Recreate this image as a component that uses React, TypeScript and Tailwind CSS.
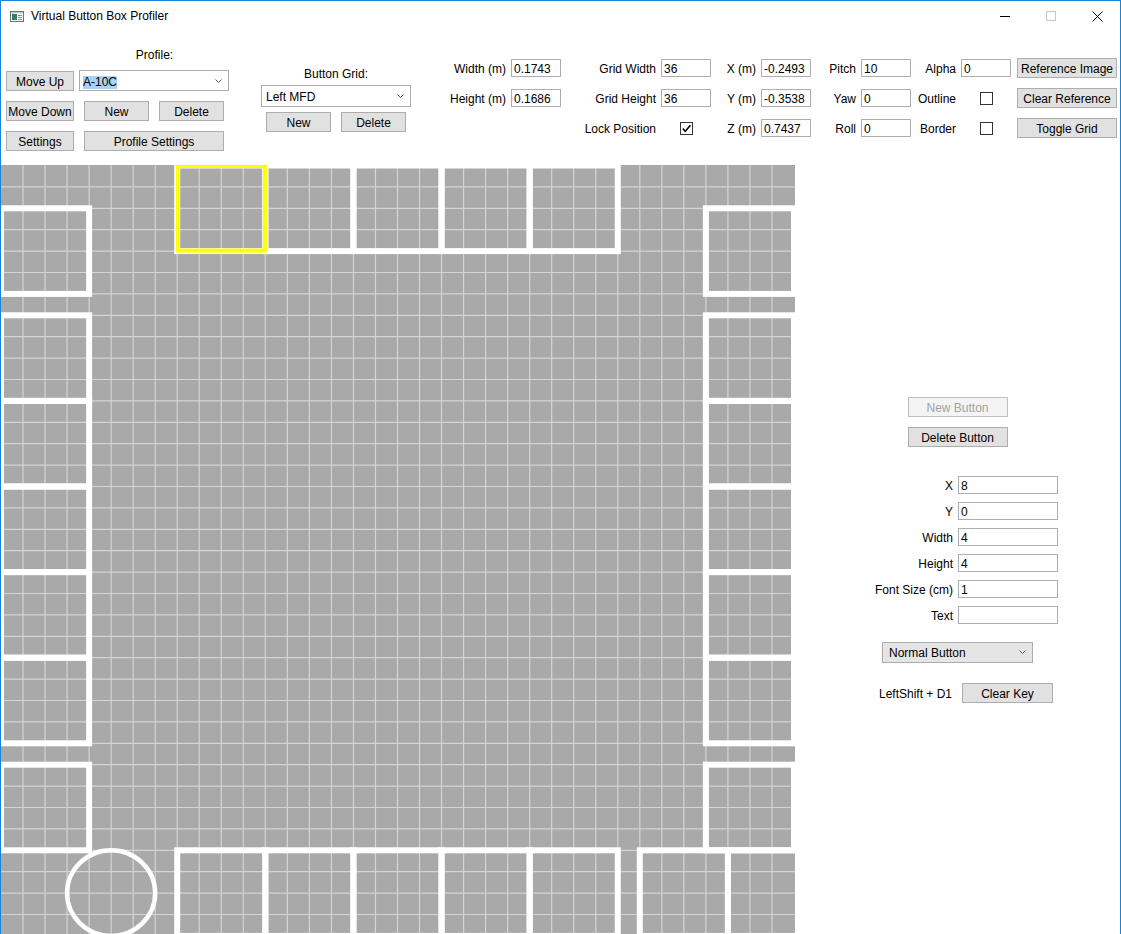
import React from 'react'

type Kids = { children?: React.ReactNode; className?: string }

function Btn({ children, className = '', disabled = false }: Kids & { disabled?: boolean }) {
    return (
        <div
            className={`flex shrink-0 items-center justify-center border pt-[2px] leading-none ${
                disabled
                    ? 'border-[#bfbfbf] bg-[#f4f4f4] text-[#a3a3a3]'
                    : 'border-[#adadad] bg-[#e1e1e1] text-black'
            } ${className}`}
        >
            {children}
        </div>
    )
}

function Chevron() {
    return (
        <svg width="7" height="4" viewBox="0 0 7 4" className="shrink-0">
            <path d="M0.5 0.5L3.5 3.5L6.5 0.5" fill="none" stroke="#5a5a5a" strokeWidth="1" />
        </svg>
    )
}

function Combo({ children, className = '', selected = false }: Kids & { selected?: boolean }) {
    return (
        <div className={`flex shrink-0 items-center justify-between border border-[#acacac] pr-[6px] ${className}`}>
            <span className={selected ? 'mt-[4px] bg-[#a8d1f5] leading-[13px]' : 'pt-[2px] leading-[16px]'}>
                {children}
            </span>
            <Chevron />
        </div>
    )
}

function TextBox({ value = '', className = '' }: { value?: string; className?: string }) {
    return (
        <div className={`h-[18px] border border-[#abadb3] bg-white pt-[1px] pl-[2px] leading-[16px] ${className}`}>
            {value}
        </div>
    )
}

function Check({ checked = false }: { checked?: boolean }) {
    return (
        <div className="flex h-[13px] w-[13px] items-center justify-center justify-self-center border border-[#333333] bg-white">
            {checked && (
                <svg width="11" height="11" viewBox="0 0 11 11">
                    <path d="M1.8 5.6L4.3 8.2L9.4 2.2" fill="none" stroke="#000" strokeWidth="1.6" />
                </svg>
            )}
        </div>
    )
}

function Label({ children }: Kids) {
    return <div className="pt-[2px] pr-[5px] text-right leading-[16px] whitespace-nowrap">{children}</div>
}

function TitleBar() {
    return (
        <div className="flex h-[30px] items-center">
            <svg width="14" height="11" viewBox="0 0 14 11" className="ml-[9px]">
                <rect x="0.5" y="0.5" width="13" height="10" fill="#fff" stroke="#707070" />
                <rect x="1" y="1" width="12" height="1.5" fill="#c9c9c9" />
                <rect x="2" y="3" width="5" height="6" fill="#2f7f6c" />
                <line x1="8" y1="4.5" x2="12" y2="4.5" stroke="#8a8a8a" />
                <line x1="8" y1="6.5" x2="12" y2="6.5" stroke="#8a8a8a" />
                <line x1="8" y1="8.5" x2="12" y2="8.5" stroke="#8a8a8a" />
            </svg>
            <span className="ml-[7px] leading-none">Virtual Button Box Profiler</span>
            <div className="ml-auto flex h-full">
                <div className="flex h-full w-[46px] items-center justify-center">
                    <div className="h-px w-[10px] bg-black" />
                </div>
                <div className="flex h-full w-[46px] items-center justify-center">
                    <div className="h-[10px] w-[10px] border border-[#c6c6c6]" />
                </div>
                <div className="flex h-full w-[46px] items-center justify-center">
                    <svg width="11" height="11" viewBox="0 0 11 11">
                        <path d="M0.5 0.5L10.5 10.5M10.5 0.5L0.5 10.5" stroke="#000" strokeWidth="1" />
                    </svg>
                </div>
            </div>
        </div>
    )
}

const CW = 793 / 36
const CH = 21.4
const OY = 0.5

const buttonCells: [number, number][] = [
    [0, 2], [32, 2],
    [8, 0], [12, 0], [16, 0], [20, 0], [24, 0],
    [0, 7], [0, 11], [0, 15], [0, 19], [0, 23], [0, 28],
    [32, 7], [32, 11], [32, 15], [32, 19], [32, 23], [32, 28],
    [8, 32], [12, 32], [16, 32], [20, 32], [24, 32], [29, 32], [33, 32],
]

function Canvas() {
    const px = (k: number) => k * CW
    const py = (k: number) => OY + k * CH
    const lines: React.ReactNode[] = []
    for (let i = 1; i < 36; i++) {
        lines.push(<line key={'v' + i} x1={px(i)} x2={px(i)} y1={0} y2={769} />)
        lines.push(<line key={'h' + i} x1={0} x2={794} y1={py(i)} y2={py(i)} />)
    }

    return (
        <svg width="794" height="769" className="block shrink-0">
            <defs>
                <filter id="soft" x="-5%" y="-5%" width="110%" height="110%">
                    <feGaussianBlur stdDeviation="0.5" />
                </filter>
            </defs>
            <rect width="794" height="769" fill="#a9a9a9" />
            <g stroke="#d4d4d4" strokeWidth="1.2">{lines}</g>
            <g fill="none" stroke="#ffffff" strokeWidth="6" filter="url(#soft)">
                {buttonCells.map(([x, y]) => (
                    <rect key={`${x}-${y}`} x={px(x)} y={py(y)} width={px(4)} height={4 * CH} />
                ))}
                <ellipse cx={px(5)} cy={py(34)} rx={2 * CW} ry={2 * CH} strokeWidth="4.5" />
            </g>
            <rect
                x={px(8) + 0.5}
                y={py(0) + 0.5}
                width={px(4) - 1}
                height={4 * CH - 1}
                fill="none"
                stroke="#ffff00"
                strokeWidth="4"
            />
        </svg>
    )
}

export default function App() {
    return (
        <div className="h-[934px] w-[1121px] overflow-hidden border-x border-t border-[#1883d7] bg-white font-['Liberation_Sans',Arial,sans-serif] text-[12px] text-black">
            <TitleBar />

            {/* Toolbar */}
            <div className="flex h-[134px] items-start">
                <div className="ml-[5px] flex w-[224px] flex-col">
                    <div className="mt-[15px] h-[16px] pt-[1px] pl-[73px] text-center leading-[16px]">Profile:</div>
                    <div className="mt-[8px] flex h-[21px] items-center gap-[5px]">
                        <Btn className="h-[20px] w-[68px]">Move Up</Btn>
                        <Combo className="h-[21px] w-[150px] bg-white pl-[3px]" selected>A-10C</Combo>
                    </div>
                    <div className="mt-[10px] flex gap-[10px]">
                        <Btn className="h-[20px] w-[68px]">Move Down</Btn>
                        <Btn className="h-[20px] w-[65px]">New</Btn>
                        <Btn className="h-[20px] w-[65px]">Delete</Btn>
                    </div>
                    <div className="mt-[10px] flex gap-[10px]">
                        <Btn className="h-[20px] w-[68px]">Settings</Btn>
                        <Btn className="h-[20px] w-[140px]">Profile Settings</Btn>
                    </div>
                </div>

                <div className="ml-[31px] flex w-[150px] flex-col">
                    <div className="mt-[34px] h-[16px] pt-[1px] text-center leading-[16px]">Button Grid:</div>
                    <Combo className="mt-[4px] h-[22px] w-[150px] bg-white pl-[4px]">Left MFD</Combo>
                    <div className="mt-[5px] flex gap-[10px] pl-[5px]">
                        <Btn className="h-[20px] w-[65px]">New</Btn>
                        <Btn className="h-[20px] w-[65px]">Delete</Btn>
                    </div>
                </div>

                <div className="mt-[22px] grid grid-cols-[100px_50px_100px_50px_50px_50px_50px_50px_50px_50px_6px_100px] grid-rows-[30px_30px_30px] items-center">
                    <Label>Width (m)</Label>
                    <TextBox value="0.1743" />
                    <Label>Grid Width</Label>
                    <TextBox value="36" />
                    <Label>X (m)</Label>
                    <TextBox value="-0.2493" />
                    <Label>Pitch</Label>
                    <TextBox value="10" />
                    <Label>Alpha</Label>
                    <TextBox value="0" />
                    <div />
                    <Btn className="h-[20px] w-[100px]">Reference Image</Btn>

                    <Label>Height (m)</Label>
                    <TextBox value="0.1686" />
                    <Label>Grid Height</Label>
                    <TextBox value="36" />
                    <Label>Y (m)</Label>
                    <TextBox value="-0.3538" />
                    <Label>Yaw</Label>
                    <TextBox value="0" />
                    <Label>Outline</Label>
                    <Check />
                    <div />
                    <Btn className="h-[20px] w-[100px]">Clear Reference</Btn>

                    <div />
                    <div />
                    <Label>Lock Position</Label>
                    <Check checked />
                    <Label>Z (m)</Label>
                    <TextBox value="0.7437" />
                    <Label>Roll</Label>
                    <TextBox value="0" />
                    <Label>Border</Label>
                    <Check />
                    <div />
                    <Btn className="h-[20px] w-[100px]">Toggle Grid</Btn>
                </div>
            </div>

            {/* Main area */}
            <div className="flex h-[769px]">
                <Canvas />

                <div className="flex flex-1 flex-col justify-center">
                    <Btn disabled className="mx-auto h-[20px] w-[100px]">New Button</Btn>
                    <Btn className="mx-auto mt-[10px] h-[20px] w-[100px]">Delete Button</Btn>

                    <div className="mt-[29px] grid grid-cols-[163px_100px] items-center gap-y-[8px]">
                        <Label>X</Label>
                        <TextBox value="8" />
                        <Label>Y</Label>
                        <TextBox value="0" />
                        <Label>Width</Label>
                        <TextBox value="4" />
                        <Label>Height</Label>
                        <TextBox value="4" />
                        <Label>Font Size (cm)</Label>
                        <TextBox value="1" />
                        <Label>Text</Label>
                        <TextBox />
                    </div>

                    <Combo className="mt-[18px] ml-[87px] h-[21px] w-[151px] bg-[#e5e5e5] pl-[6px]">Normal Button</Combo>

                    <div className="mt-[20px] ml-[84px] flex items-center">
                        <span className="w-[83px] pt-[2px] leading-[16px]">LeftShift + D1</span>
                        <Btn className="h-[20px] w-[91px]">Clear Key</Btn>
                    </div>
                </div>
            </div>
        </div>
    )
}
